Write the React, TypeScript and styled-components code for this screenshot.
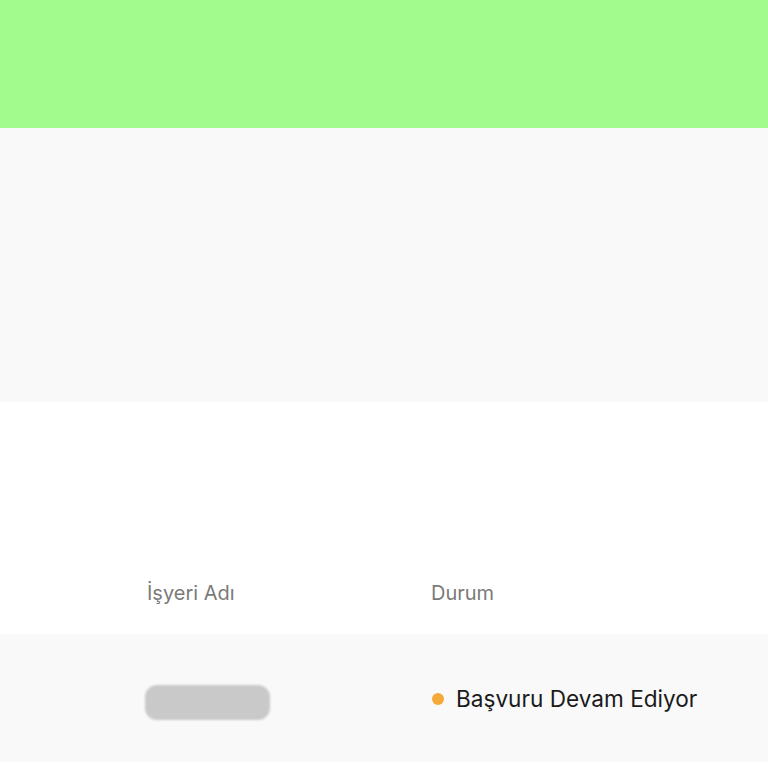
import React from "react";
import styled, { createGlobalStyle } from "styled-components";

const GlobalStyle = createGlobalStyle`
  html, body {
    margin: 0;
    padding: 0;
    background: #ffffff;
    font-family: "Inter", "Noto Sans", sans-serif;
  }
`;

const Page = styled.div`
  display: flex;
  flex-direction: column;
  width: 100%;
`;

const Banner = styled.header`
  height: 128px;
  background: #a1fc8d;
`;

const Hero = styled.section`
  height: 274px;
  background: #f9f9f9;
`;

const Spacer = styled.div`
  height: 148px;
  background: #ffffff;
`;

const Row = styled.div<{ $body?: boolean }>`
  display: grid;
  grid-template-columns: 284px 1fr;
  align-items: center;
  padding-left: 147px;
  height: ${(p) => (p.$body ? "128px" : "84px")};
  background: ${(p) => (p.$body ? "#f9f9f9" : "#ffffff")};
`;

const HeadCell = styled.div`
  font-size: 20px;
  color: #7a7a7a;
  padding-top: 1px;
`;

const Redacted = styled.div`
  width: 125px;
  height: 35px;
  border-radius: 12px;
  background: #c9c9c9;
  filter: blur(1px);
  margin-left: -2px;
  margin-top: 9px;
`;

const Status = styled.div`
  display: flex;
  align-items: center;
  gap: 12px;
  font-size: 22.6px;
  color: #1b1b1b;
`;

const Dot = styled.span<{ $color: string }>`
  width: 12px;
  height: 12px;
  border-radius: 50%;
  background: ${(p) => p.$color};
  margin-left: 1px;
  margin-top: 2px;
`;

export default function App() {
  return (
    <Page>
      <GlobalStyle />
      <Banner />
      <Hero />
      <Spacer />
      <Row>
        <HeadCell>İşyeri Adı</HeadCell>
        <HeadCell>Durum</HeadCell>
      </Row>
      <Row $body>
        <Redacted />
        <Status>
          <Dot $color="#f4a93a" />
          Başvuru Devam Ediyor
        </Status>
      </Row>
    </Page>
  );
}
